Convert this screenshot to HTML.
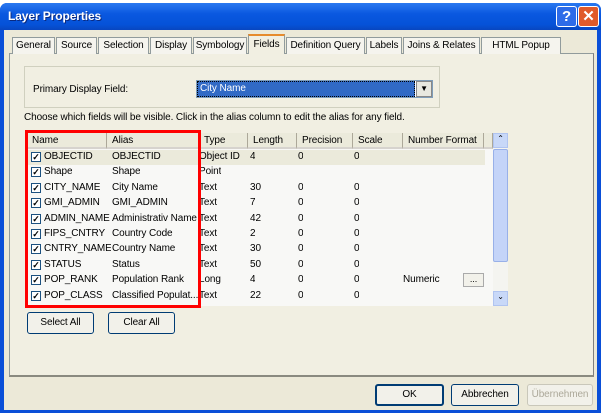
<!DOCTYPE html>
<html><head><style>
*{box-sizing:border-box;margin:0;padding:0}
body{width:601px;height:413px;background:#fff;position:relative;overflow:hidden;font-family:"Liberation Sans",sans-serif;font-size:10px;letter-spacing:-0.1px;color:#000}
.a{position:absolute}
.win{left:0;top:3px;width:601px;height:410px;background:#0a4fd8;border-radius:7px 7px 0 0}
.title{left:0;top:3px;width:601px;height:27px;background:linear-gradient(#2a78f0,#0a58e0 40%,#0552d8 80%,#0846c0);border-radius:7px 7px 0 0}
.tt{left:8px;top:9px;color:#fff;font-weight:bold;font-size:12px;text-shadow:1px 1px #0a2a80}
.btn{width:21px;height:21px;border:1px solid #fff;border-radius:3px;color:#fff;font-weight:bold;font-size:15px;text-align:center;line-height:19px}
.body{left:4px;top:30px;width:593px;height:380px;background:#ece9d8}
.tab{top:37px;height:17px;background:#f5f4ee;border:1px solid #919b9c;border-bottom:none;padding-top:2px;text-align:center;white-space:nowrap;overflow:hidden}
.panel{left:9px;top:53px;width:585px;height:324px;background:#f1efe2;border:1px solid #919b9c;border-right-color:#7f7f7f;border-bottom:2px solid #8a8a80}
.grp{left:24px;top:66px;width:416px;height:42px;border:1px solid #d0d0bf}
.pb{background:#f2f1ea;border:1px solid #003c74;border-radius:3px;text-align:center;line-height:20px;height:22px}
.tbl{left:27px;top:133px;width:481px;height:173px;background:#f8f8f6}
.hd{top:0;height:16px;background:#ebeadb;border-right:1px solid #aca899;border-bottom:2px solid #d6d3ce;padding:2px 0 0 5px;white-space:nowrap;overflow:hidden}
.row{left:0;width:465px;height:15px}
.c{position:absolute;top:1px;white-space:nowrap;overflow:hidden}
.cb{position:absolute;left:4px;top:2px;width:10px;height:10px;border:1px solid #1c5180;background:#fff;font-size:9px;line-height:8px;text-align:center;font-weight:bold}
</style></head><body>
<div class="a win"></div>
<div class="a title"></div>
<div class="a tt">Layer Properties</div>
<div class="a btn" style="left:556px;top:6px;background:#2d6be8">?</div>
<div class="a btn" style="left:578px;top:6px;background:#e05a2a">✕</div>
<div class="a body"></div>
<div class="a panel"></div>
<div class="a tab" style="left:12px;width:43px">General</div>
<div class="a tab" style="left:56px;width:41px">Source</div>
<div class="a tab" style="left:98px;width:51px">Selection</div>
<div class="a tab" style="left:150px;width:42px">Display</div>
<div class="a tab" style="left:193px;width:54px">Symbology</div>
<div class="a tab" style="left:248px;top:34px;width:37px;height:20px;background:#f1efe2;border-top:2px solid #e68b2c;padding-top:3px">Fields</div>
<div class="a tab" style="left:286px;width:79px">Definition Query</div>
<div class="a tab" style="left:366px;width:36px">Labels</div>
<div class="a tab" style="left:403px;width:77px">Joins &amp; Relates</div>
<div class="a tab" style="left:481px;width:80px">HTML Popup</div>
<div class="a grp"></div>
<div class="a" style="left:33px;top:84px">Primary Display Field:</div>
<div class="a" style="left:196px;top:80px;width:237px;height:18px;border:1px solid #7f9db9;background:#fff"></div>
<div class="a" style="left:197px;top:81px;width:218px;height:16px;background:#316ac5;color:#fff;padding:1px 2px;border:1px dotted #000">City Name</div>
<div class="a" style="left:416px;top:81px;width:16px;height:16px;background:#e8e8e0;border:1px solid #888;font-size:8px;text-align:center;line-height:14px">▼</div>
<div class="a" style="left:24px;top:112px">Choose which fields will be visible. Click in the alias column to edit the alias for any field.</div>
<div class="a tbl">
<div class="a hd" style="left:0;width:80px">Name</div>
<div class="a hd" style="left:80px;width:92px">Alias</div>
<div class="a hd" style="left:172px;width:49px">Type</div>
<div class="a hd" style="left:221px;width:49px">Length</div>
<div class="a hd" style="left:270px;width:56px">Precision</div>
<div class="a hd" style="left:326px;width:50px">Scale</div>
<div class="a hd" style="left:376px;width:81px">Number Format</div>
<div class="a hd" style="left:457px;width:9px"></div>
<div class="a" style="left:0;top:17px;width:458px;height:15px;background:#ebeadb"></div>
<div class="a" style="left:466px;top:0;width:15px;height:173px;background:#f4f4f0">
<div class="a" style="left:0;top:0;width:15px;height:15px;background:#c8d8f8;border:1px solid #b0c4f0;font-size:8px;text-align:center">⌃</div>
<div class="a" style="left:0;top:16px;width:15px;height:113px;background:#c4d4f8;border:1px solid #98b0e8;border-radius:2px"></div>
<div class="a" style="left:0;top:158px;width:15px;height:15px;background:#c8d8f8;border:1px solid #b0c4f0;font-size:8px;text-align:center">⌄</div>
</div>
</div>
<div class="a" style="left:27px;top:150px;width:465px;height:160px">
<div class="a row" style="top:0"><span class="cb">✓</span><span class="c" style="left:17px">OBJECTID</span><span class="c" style="left:85px">OBJECTID</span><span class="c" style="left:172px">Object ID</span><span class="c" style="left:223px">4</span><span class="c" style="left:271px">0</span><span class="c" style="left:327px">0</span></div>
<div class="a row" style="top:15.4px"><span class="cb">✓</span><span class="c" style="left:17px">Shape</span><span class="c" style="left:85px">Shape</span><span class="c" style="left:172px">Point</span></div>
<div class="a row" style="top:30.8px"><span class="cb">✓</span><span class="c" style="left:17px">CITY_NAME</span><span class="c" style="left:85px">City Name</span><span class="c" style="left:172px">Text</span><span class="c" style="left:223px">30</span><span class="c" style="left:271px">0</span><span class="c" style="left:327px">0</span></div>
<div class="a row" style="top:46.2px"><span class="cb">✓</span><span class="c" style="left:17px">GMI_ADMIN</span><span class="c" style="left:85px">GMI_ADMIN</span><span class="c" style="left:172px">Text</span><span class="c" style="left:223px">7</span><span class="c" style="left:271px">0</span><span class="c" style="left:327px">0</span></div>
<div class="a row" style="top:61.6px"><span class="cb">✓</span><span class="c" style="left:17px;width:67px">ADMIN_NAME</span><span class="c" style="left:85px;width:86px">Administrativ Name</span><span class="c" style="left:172px">Text</span><span class="c" style="left:223px">42</span><span class="c" style="left:271px">0</span><span class="c" style="left:327px">0</span></div>
<div class="a row" style="top:77px"><span class="cb">✓</span><span class="c" style="left:17px;width:67px">FIPS_CNTRY</span><span class="c" style="left:85px">Country Code</span><span class="c" style="left:172px">Text</span><span class="c" style="left:223px">2</span><span class="c" style="left:271px">0</span><span class="c" style="left:327px">0</span></div>
<div class="a row" style="top:92.4px"><span class="cb">✓</span><span class="c" style="left:17px;width:67px">CNTRY_NAME</span><span class="c" style="left:85px">Country Name</span><span class="c" style="left:172px">Text</span><span class="c" style="left:223px">30</span><span class="c" style="left:271px">0</span><span class="c" style="left:327px">0</span></div>
<div class="a row" style="top:107.8px"><span class="cb">✓</span><span class="c" style="left:17px">STATUS</span><span class="c" style="left:85px">Status</span><span class="c" style="left:172px">Text</span><span class="c" style="left:223px">50</span><span class="c" style="left:271px">0</span><span class="c" style="left:327px">0</span></div>
<div class="a row" style="top:123.2px"><span class="cb">✓</span><span class="c" style="left:17px">POP_RANK</span><span class="c" style="left:85px">Population Rank</span><span class="c" style="left:172px">Long</span><span class="c" style="left:223px">4</span><span class="c" style="left:271px">0</span><span class="c" style="left:327px">0</span><span class="c" style="left:376px">Numeric</span><span class="a" style="left:436px;top:0;width:21px;height:14px;background:#f2f1ea;border:1px solid #aaa;font-size:9px;text-align:center">...</span></div>
<div class="a row" style="top:138.6px"><span class="cb">✓</span><span class="c" style="left:17px;width:67px">POP_CLASS</span><span class="c" style="left:85px;width:86px">Classified Populat...</span><span class="c" style="left:172px">Text</span><span class="c" style="left:223px">22</span><span class="c" style="left:271px">0</span><span class="c" style="left:327px">0</span></div>
</div>
<div class="a" style="left:25px;top:130px;width:176px;height:178px;border:3px solid #f00"></div>
<div class="a pb" style="left:27px;top:312px;width:67px">Select All</div>
<div class="a pb" style="left:108px;top:312px;width:67px">Clear All</div>
<div class="a pb" style="left:375px;top:384px;width:69px;border-width:2px;line-height:18px">OK</div>
<div class="a pb" style="left:451px;top:384px;width:68px">Abbrechen</div>
<div class="a pb" style="left:527px;top:384px;width:66px;color:#aca899;border-color:#c9c7ba">Übernehmen</div>
</body></html>
